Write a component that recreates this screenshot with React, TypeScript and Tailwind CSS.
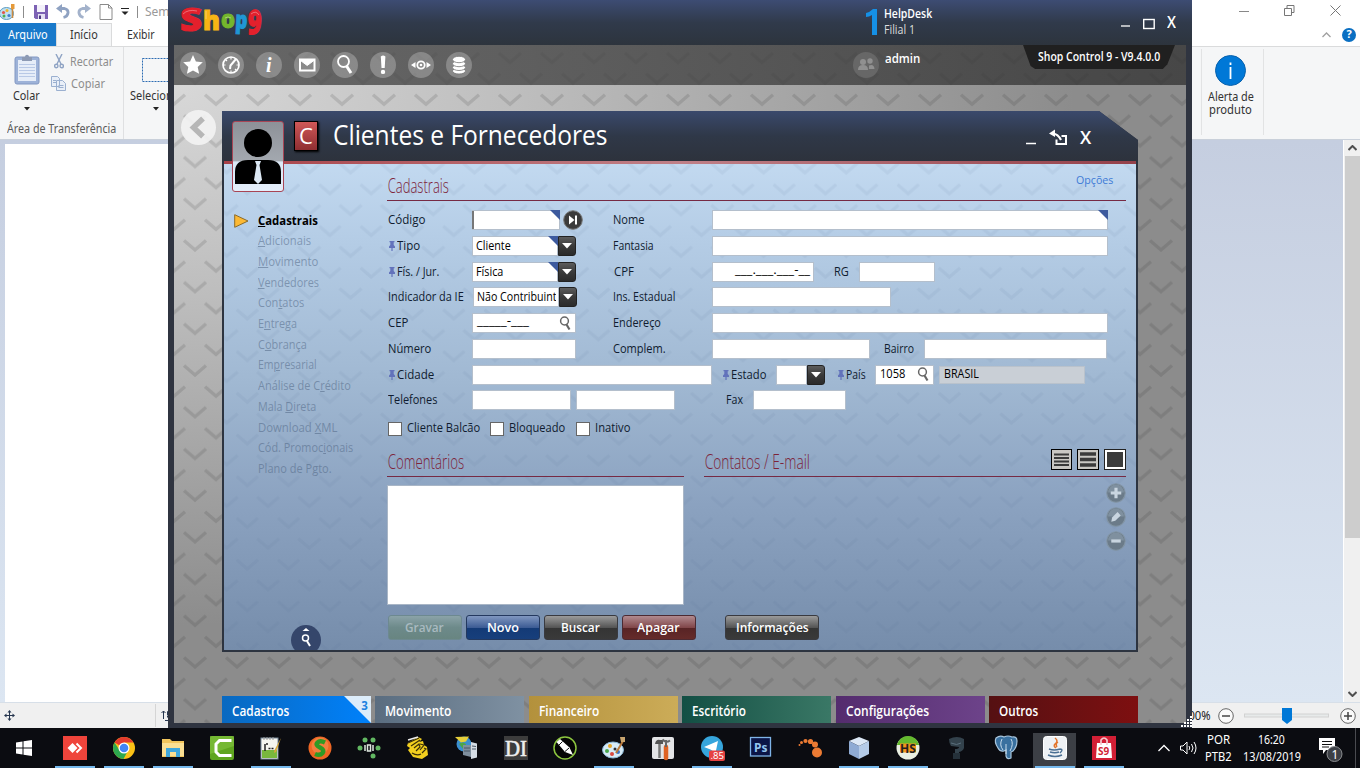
import { useLayoutEffect, useRef } from "react";
import type { ReactNode } from "react";

/* Text squeezed or stretched horizontally to a fixed width. */
function Fit({ w, className = "", children }: { w: number; className?: string; children: ReactNode }) {
  const ref = useRef<HTMLSpanElement>(null);
  useLayoutEffect(() => {
    const el = ref.current;
    if (el && el.offsetWidth) el.style.transform = `scaleX(${w / el.offsetWidth})`;
  }, [w]);
  return (
    <span className="inline-block shrink-0" style={{ width: w }}>
      <span ref={ref} className={`block w-max origin-left whitespace-pre ${className}`}>
        {children}
      </span>
    </span>
  );
}

function Chevrons({ id, x, y, w, h, color, opacity }: { id: string; x: number; y: number; w: number; h: number; color: string; opacity: number }) {
  return (
    <svg className="pointer-events-none absolute inset-0 h-full w-full" aria-hidden="true">
      <defs>
        <pattern id={id} x={x} y={y} width={w} height={h} patternUnits="userSpaceOnUse">
          <g fill="none" stroke={color} strokeOpacity={opacity} strokeWidth="3.4">
            <path d="M10 4.500 L21 14 L32 4.500" />
            <path d="M-11 25.500 L0 35 L11 25.500" />
            <path d="M31 25.500 L42 35 L53 25.500" />
          </g>
        </pattern>
      </defs>
      <rect width="100%" height="100%" fill={`url(#${id})`} />
    </svg>
  );
}

/* ---------- Paint window ---------- */

function PaintTop() {
  return (
    <div className="flex h-[140px] flex-col text-[#444]">
      <div className="flex h-[23px] items-center bg-white">
        <svg width="16" height="18" viewBox="0 0 16 18">
          <ellipse cx="6.5" cy="10.5" rx="7" ry="6" fill="#bfe0f2" stroke="#5b9cc0" />
          <circle cx="3.5" cy="9.5" r="1.6" fill="#e2574c" />
          <circle cx="7" cy="7.5" r="1.5" fill="#f0b429" />
          <circle cx="4" cy="13" r="1.5" fill="#4caf50" />
          <circle cx="9" cy="12.5" r="1.6" fill="#3f7fd0" />
          <path d="M12.5 3v12" stroke="#c98a43" strokeWidth="1.6" />
          <path d="M11 1h3.500v5H11z" fill="#e59a3a" />
        </svg>
        <span className="ml-[7px] h-[12px] w-px bg-[#8c8c8c]" />
        <svg className="ml-[10px]" width="14" height="14" viewBox="0 0 14 14">
          <path d="M0 0h14v14H1.500L0 12.500z" fill="#7d62b4" />
          <path d="M3 0h8v7H3z" fill="#f3f1fa" />
          <path d="M4 9h7v5H4z" fill="#e4e0f2" />
          <path d="M5 10.500h2v4H5z" fill="#4a3a80" />
        </svg>
        <svg className="ml-[8px]" width="14" height="15" viewBox="0 0 14 15">
          <path d="M3 4.500h5.500q4 1 3.500 4.500T7.500 13.500" fill="none" stroke="#8fa2c2" strokeWidth="2.800" />
          <path d="M6 0v9L0 4.500z" fill="#8fa2c2" />
        </svg>
        <svg className="ml-[7px]" width="14" height="15" viewBox="0 0 14 15">
          <path d="M11 4.500H5.500q-4 1-3.500 4.500T6.500 13.500" fill="none" stroke="#a3b2cb" strokeWidth="2.800" />
          <path d="M8 0v9L14 4.500z" fill="#a3b2cb" />
        </svg>
        <svg className="ml-[8px]" width="14" height="16" viewBox="0 0 14 16">
          <path d="M1 .5h8.500L13 4v11.500H1z" fill="#fff" stroke="#8a8a8a" />
          <path d="M9.500.5V4H13" fill="none" stroke="#8a8a8a" />
        </svg>
        <svg className="ml-[8px]" width="8" height="8" viewBox="0 0 8 8">
          <path d="M0 .5h8" stroke="#222" />
          <path d="M.5 3.500h7L4 7z" fill="#222" />
        </svg>
        <span className="ml-[8px] h-[12px] w-px bg-[#8c8c8c]" />
        <span className="ml-[7px] text-[12px] text-[#999]">Sem título - Paint</span>
        <div className="ml-auto flex items-center gap-[35px] pr-[19px]">
          <svg width="10" height="10"><path d="M0 4.500h10" stroke="#888" /></svg>
          <svg className="-mt-[3px]" width="11" height="11" fill="none" stroke="#777"><path d="M.5 3.500h7v7h-7zM3 3.500V.5h7v7H7.500" /></svg>
          <svg className="-mt-[3px]" width="11" height="11" stroke="#777"><path d="M.5.5l10 10M10.500.5l-10 10" /></svg>
        </div>
      </div>
      <div className="flex h-[23px] items-stretch bg-white text-[12px] text-[#333]">
        <div className="flex w-[56px] items-center justify-center bg-[#1979ca] text-white"><Fit w={40}>Arquivo</Fit></div>
        <div className="flex w-[56px] items-center justify-center border-x border-t border-[#dadbdc] bg-[#f5f6f7]"><Fit w={28}>Início</Fit></div>
        <div className="flex w-[58px] items-center justify-center"><Fit w={28}>Exibir</Fit></div>
        <div className="ml-auto flex items-center gap-[11px] pr-[4px]">
          <svg width="9" height="6" fill="none" stroke="#a0a0a0" strokeWidth="1.300"><path d="M.5 5l4-4 4 4" /></svg>
          <span className="flex h-[14px] w-[14px] items-center justify-center rounded-full bg-[#0a6fc2] text-[11px] font-bold text-white">?</span>
        </div>
      </div>
      <div className="flex h-[94px] border-y border-[#dadbdc] border-b-[#c9d0da] bg-[#f5f6f7] text-[12px]">
        <div className="flex w-[124px] flex-col border-r border-[#dfe0e2]">
          <div className="flex h-[73px]">
            <div className="flex w-[50px] flex-col items-center pl-[3px] pt-[7px]">
              <svg width="26" height="31" viewBox="0 0 26 31">
                <rect x="1" y="3" width="24" height="27" rx="2" fill="#9db2d8" stroke="#8298c2" />
                <rect x="4" y="6" width="18" height="21" fill="#e6edf8" />
                <path d="M5 10.500h16M5 13.500h16M5 16.500h16M5 19.500h16M5 22.500h16" stroke="#b9c9e6" />
                <path d="M8 3h3c0-3 4-3 4 0h3v4H8z" fill="#8d9ab4" />
              </svg>
              <span className="mt-[3px] leading-[15px]"><Fit w={27} className="text-[#333]">Colar</Fit></span>
              <svg className="mt-[4px]" width="6" height="4"><path d="M0 0h6L3 3.500z" fill="#222" /></svg>
            </div>
            <div className="flex flex-col gap-[5px] pt-[6px] text-[#8d8d8d]">
              <div className="flex h-[17px] items-center gap-[6px] pl-[4px]">
                <svg width="10" height="15" fill="none" stroke="#8fa3c4" strokeWidth="1.400"><path d="M2 0l5 10M8 0L3 10" /><circle cx="2.300" cy="12" r="1.700" /><circle cx="7.700" cy="12" r="1.700" /></svg>
                <Fit w={43}>Recortar</Fit>
              </div>
              <div className="flex h-[17px] items-center gap-[5px] pl-[1px]">
                <svg width="15" height="15" fill="#e9eff8" stroke="#9bb0d0"><path d="M.5.5h6l2 2v8h-8zM5.500 4.500h6l3 3v7h-9z" /><path d="M2 4.500h3M2 6.500h3M7.500 9.500h5M7.500 11.500h5" /></svg>
                <Fit w={34}>Copiar</Fit>
              </div>
            </div>
          </div>
          <span className="pl-[7px] leading-[18px]"><Fit w={109} className="text-[#5a5a5a]">Área de Transferência</Fit></span>
        </div>
        <div className="flex w-[64px] flex-col items-center pt-[11px]">
          <svg width="28" height="24"><rect x=".5" y=".5" width="27" height="23" fill="none" stroke="#2c6cb3" strokeDasharray="2 1" /></svg>
          <span className="mt-[6px] leading-[15px]"><Fit w={53} className="text-[#333]">Selecionar</Fit></span>
          <svg className="mt-[4px]" width="6" height="4"><path d="M0 0h6L3 3.500z" fill="#222" /></svg>
        </div>
        <div className="ml-auto mr-[96px] mt-[2px] flex h-[86px] w-[63px] flex-col items-center border-x border-[#e2e3e4] pr-[4px] pt-[6px]">
          <svg width="31" height="31" viewBox="0 0 31 31"><circle cx="15.500" cy="15.500" r="15" fill="#0078d7" stroke="#0a62ad" /><path d="M15.500 12v12M15.500 7.500v2.500" stroke="#fff" strokeWidth="1.800" /></svg>
          <span className="mt-[4px] flex flex-col items-center text-[12px] leading-[13px] text-[#333]"><Fit w={46}>Alerta de</Fit><Fit w={43}>produto</Fit></span>
        </div>
      </div>
    </div>
  );
}

function Paint() {
  return (
    <div className="flex h-[728px] w-full flex-col overflow-hidden font-['Noto_Sans',sans-serif]">
      <PaintTop />
      <div className="flex h-[562px]">
        <div className="flex-1 bg-gradient-to-b from-[#c5cee0] to-[#dce6f2] pl-[5px] pt-[4px]">
          <div className="h-full w-[600px] bg-white" />
        </div>
        <div className="flex w-[17px] flex-col items-center border-l border-white bg-[#f0f0f0]">
          <svg className="my-[5px]" width="9" height="6" fill="none" stroke="#505050" strokeWidth="2"><path d="M.5 5l4-4 4 4" /></svg>
          <div className="h-[382px] w-[15px] bg-[#cdcdcd]" />
          <svg className="mb-[5px] mt-auto" width="9" height="6" fill="none" stroke="#505050" strokeWidth="2"><path d="M.5 1l4 4 4-4" /></svg>
        </div>
      </div>
      <div className="flex h-[26px] items-center border-t border-[#d7dfe8] bg-[#f0f0f0]">
        <svg className="ml-[4px]" width="11" height="11" stroke="#26364f" fill="#26364f"><path d="M5.500 1v9M1 5.500h9" /><path stroke="none" d="M5.500 0l2 2.500h-4zM5.500 11l2-2.500h-4zM0 5.500L2.500 3.500v4zM11 5.500L8.500 3.500v4z" /></svg>
        <span className="ml-[140px] h-[23px] w-px bg-[#d5d5d5]" />
        <svg className="ml-[5px]" width="11" height="11" stroke="#26364f" fill="none"><path d="M2.500 1v8M.5 3l2-2 2 2M6.500 5V1.500h4M6.500 5.500v2M4 10.500h7" /></svg>
        <div className="ml-auto flex items-center text-[12px] text-[#222]">
          <Fit w={29}>100%</Fit>
          <svg className="ml-[7px]" width="16" height="16" fill="#fafafa" stroke="#666"><circle cx="8" cy="8" r="7.300" /><path d="M4 8h8" stroke="#444" strokeWidth="1.500" /></svg>
          <svg className="ml-[10px]" width="85" height="18"><rect x=".5" y="7" width="84" height="3" fill="#e7eaea" stroke="#d2d2d2" /><path d="M38 1h10v12l-5 4-5-4z" fill="#0078d7" /></svg>
          <svg className="ml-[11px] mr-[4px]" width="16" height="16" fill="#fafafa" stroke="#666"><circle cx="8" cy="8" r="7.300" /><path d="M4 8h8M8 4v8" stroke="#444" strokeWidth="1.500" /></svg>
        </div>
      </div>
    </div>
  );
}

/* ---------- Shop Control window ---------- */

/* letter, x, baseline, font size, width, colour, rotation */
const logo: [string, number, number, number, number, string, number][] = [
  ["S", 2, 26, 32, 22, "#e3202c", 0],
  ["h", 25, 25, 27, 17, "#f8b414", 0],
  ["o", 43, 23, 25, 14, "#74b62c", 0],
  ["p", 57, 23, 24, 12, "#1f97d4", 3],
  ["9", 69, 29, 34, 14, "#e3202c", 3],
];

function Logo() {
  return (
    <svg width="88" height="40" viewBox="0 0 88 40" className="overflow-visible font-['Open_Sans',sans-serif] font-extrabold">
      {logo.map(([c, x, y, s, w, f, r]) => (
        <g key={c} transform={`translate(${x} ${y}) rotate(${r})`}>
          <text fontSize={s} textLength={w} lengthAdjust="spacingAndGlyphs" fill={f} stroke={f} strokeWidth="1">{c}</text>
        </g>
      ))}
      <g fill="none" stroke="#fff" strokeOpacity=".35" strokeWidth="1">
        <path d="M5 9q5-5 14-3M28 6v8M47 13q3-2 6 0M73 9q5-4 8 1" />
      </g>
    </svg>
  );
}

const toolIcons: ReactNode[] = [
  <path key="a" d="M13 3l2.900 6.400 6.900.8-5.100 4.800 1.400 6.800-6.100-3.300-6.100 3.300 1.400-6.800-5.100-4.800 6.900-.8z" fill="#fff" />,
  <g key="b" fill="none" stroke="#fff" strokeWidth="1.700"><circle cx="13" cy="13" r="8" /><path d="M13 5v2.500M13 18.500V21M5 13h2.500M18.500 13H21M7.500 7.500l1.500 1.500M18.500 18.500L17 17" strokeWidth="1.200" /><path d="M18 7l-5.500 6.500-.5 3.500" strokeWidth="2" /></g>,
  <text key="c" x="10" y="19.500" fontSize="20" fontStyle="italic" fontWeight="bold" fontFamily="Liberation Serif, serif" fill="#fff">i</text>,
  <g key="d" fill="none" stroke="#fff" strokeWidth="2"><rect x="6" y="7.500" width="14.500" height="11" /><path d="M6.500 8.500l6.700 5 6.700-5z" fill="#fff" strokeWidth="1" /></g>,
  <g key="e" fill="none" stroke="#fff"><circle cx="11.500" cy="9.500" r="5.500" strokeWidth="1.800" /><path d="M14.500 14l4.500 7" strokeWidth="3" /></g>,
  <path key="f" d="M10.800 4.500q2.400-2 4.600 0L14.700 16h-3.200zM13 17.700a2.200 2.200 0 110 4.400 2.200 2.200 0 010-4.400z" fill="#fff" />,
  <g key="g" fill="none" stroke="#fff"><circle cx="13" cy="13" r="3.700" strokeWidth="1.800" /><circle cx="13" cy="13" r="1.300" fill="#fff" stroke="none" /><path d="M3 13l4.500-3v6zM23 13l-4.500-3v6z" fill="#fff" stroke="none" /></g>,
  <g key="h" fill="#fff" stroke="#777" strokeWidth=".8"><ellipse cx="13" cy="19" rx="6.500" ry="3" /><ellipse cx="13" cy="15.500" rx="6.500" ry="3" /><ellipse cx="13" cy="11.700" rx="6.500" ry="3" /><ellipse cx="13" cy="7.500" rx="6.500" ry="3.200" /></g>,
];

function Pin() {
  return (
    <svg className="shrink-0" width="10" height="10" viewBox="0 0 10 10"><path d="M2.500 0h5v1.200H6.700V4L8 5.500V7H5.600v3H4.400V7H2V5.500L3.300 4V1.200h-.8z" fill="#6272bb" /></svg>
  );
}

function Magnifier() {
  return (
    <svg width="13" height="15" viewBox="0 0 13 15" fill="none" stroke="#666"><circle cx="5.500" cy="5" r="3.900" strokeWidth="1.500" /><path d="M7.500 8.500l3 5" strokeWidth="2.200" /></svg>
  );
}

function Label({ t, fit, w, pin = false, inset = false }: { t: string; fit: number; w: number; pin?: boolean; inset?: boolean }) {
  return (
    <div className={`flex shrink-0 items-center text-[12.5px] leading-none text-[#101c30] ${inset ? "pl-[0.6px]" : ""}`} style={{ width: w }}>
      {pin && <Pin />}
      <Fit w={fit} className="leading-[16px]">{t}</Fit>
    </div>
  );
}

function Field({ w, corner = false, children }: { w: number; corner?: boolean; children?: ReactNode }) {
  return (
    <div className="relative flex h-[20px] shrink-0 items-center border border-[#b4bfcc] bg-white text-[12px] font-[450] text-black" style={{ width: w }}>
      {children}
      {corner && <svg className="absolute -right-px -top-px" width="10" height="10"><path d="M0 0h10v10z" fill="#3d5a9e" /></svg>}
    </div>
  );
}

function DropButton() {
  return (
    <div className="flex h-[20px] w-[18px] shrink-0 items-center justify-center rounded-r-[3px] border border-[#222] bg-gradient-to-b from-[#5c5c5c] via-[#3a3a3a] to-[#2b2b2b]">
      <svg width="10" height="6"><path d="M0 0h10L5 5.500z" fill="#fff" /></svg>
    </div>
  );
}

const menu: [string, string, string, number][] = [
  ["", "A", "dicionais", 53],
  ["", "M", "ovimento", 60],
  ["", "V", "endedores", 61],
  ["Con", "t", "atos", 46],
  ["E", "n", "trega", 39],
  ["C", "o", "brança", 49],
  ["Em", "p", "resarial", 59],
  ["Análise de C", "r", "édito", 93],
  ["Mala ", "D", "ireta", 58],
  ["Download ", "X", "ML", 79],
  ["Cód. Promoc", "i", "onais", 95],
  ["Plano de P", "g", "to.", 74],
];

function Sidebar() {
  return (
    <div className="flex w-[163px] shrink-0 flex-col pt-[46.3px] text-[12.5px]">
      <div className="flex h-[20.7px] items-center pl-[10px]">
        <svg width="15" height="14"><path d="M.7.7v12.600L14 7z" fill="#fdb933" stroke="#8a6a2a" /></svg>
        <span className="ml-[9px] leading-none"><Fit w={60} className="font-bold leading-[18px] text-black"><u>C</u>adastrais</Fit></span>
      </div>
      {menu.map(([a, b, c, w]) => (
        <div key={c} className="flex h-[20.7px] items-center pl-[34px] leading-none">
          <Fit w={w} className="leading-[18px] text-[#4a607e]/50">{a}<u>{b}</u>{c}</Fit>
        </div>
      ))}
      <div className="-mb-[5px] ml-[67px] mt-auto flex h-[30px] w-[30px] flex-col items-center rounded-full bg-[#35466b] pt-[3px]">
        <svg width="10" height="20" viewBox="0 0 10 20" fill="none" stroke="#fff"><path d="M1.500 3h7L5 0z" fill="#fff" stroke="none" /><circle cx="4.500" cy="10" r="3" strokeWidth="1.500" /><path d="M6 13l3 5" strokeWidth="2" /></svg>
      </div>
    </div>
  );
}

function Row({ children }: { children: ReactNode }) {
  return <div className="flex h-[25.75px] items-center">{children}</div>;
}
function Left({ children }: { children: ReactNode }) {
  return <div className="flex w-[226px] shrink-0 items-center">{children}</div>;
}

function Form() {
  return (
    <div className="flex flex-col pt-[6.2px]">
      <Row>
        <Left>
          <Label t="Código" fit={38} w={85} inset />
          <Field w={88} corner><span className="-ml-px h-full w-[2px] bg-[#777]" /></Field>
          <svg className="ml-[3px]" width="20" height="20"><circle cx="10" cy="10" r="9.300" fill="#3b3b3b" stroke="#777" /><path d="M6 5.500v9l5.500-4.500z" fill="#fff" /><path d="M13 5.500v9" stroke="#fff" strokeWidth="2" /></svg>
        </Left>
        <Label t="Nome" fit={32} w={99} />
        <Field w={396} corner />
      </Row>
      <Row>
        <Left>
          <Label t="Tipo" fit={23} w={85} pin />
          <Field w={86} corner><span className="pl-[3px]"><Fit w={35}>Cliente</Fit></span></Field><DropButton />
        </Left>
        <Label t="Fantasia" fit={41} w={99} />
        <Field w={396} />
      </Row>
      <Row>
        <Left>
          <Label t="Fís. / Jur." fit={42} w={85} pin />
          <Field w={86} corner><span className="pl-[3px]"><Fit w={27}>Física</Fit></span></Field><DropButton />
        </Left>
        <Label t="CPF" fit={20} w={99} inset />
        <Field w={102}><span className="pb-[4px] pl-[22px]"><Fit w={75}>___.___.___-__</Fit></span></Field>
        <span className="w-[20px]" />
        <Label t="RG" fit={15} w={25} />
        <Field w={76} />
      </Row>
      <Row>
        <Left>
          <Label t="Indicador da IE" fit={76} w={86} inset />
          <Field w={86}><span className="w-[82px] overflow-hidden pl-[3px]"><Fit w={86}>Não Contribuinte</Fit></span></Field><DropButton />
        </Left>
        <Label t="Ins. Estadual" fit={62} w={99} />
        <Field w={179} />
      </Row>
      <Row>
        <Left>
          <Label t="CEP" fit={20} w={85} inset />
          <Field w={104}><span className="pb-[4px] pl-[4px]"><Fit w={52}>_____-___</Fit></span><span className="ml-auto mr-[3px]"><Magnifier /></span></Field>
        </Left>
        <Label t="Endereço" fit={48} w={99} />
        <Field w={396} />
      </Row>
      <Row>
        <Left>
          <Label t="Número" fit={43} w={85} inset />
          <Field w={104} />
        </Left>
        <Label t="Complem." fit={53} w={99} />
        <Field w={158} />
        <span className="w-[14px]" />
        <Label t="Bairro" fit={30} w={40} />
        <Field w={183} />
      </Row>
      <Row>
        <Label t="Cidade" fit={37} w={85} pin />
        <Field w={240} />
        <span className="w-[9px]" />
        <Label t="Estado" fit={35} w={55} pin />
        <Field w={31} /><DropButton />
        <span className="w-[11px]" />
        <Label t="País" fit={20} w={39} pin />
        <Field w={59}><span className="pb-[2px] pl-[4px]"><Fit w={25}>1058</Fit></span><span className="ml-auto mr-[3px]"><Magnifier /></span></Field>
        <div className="ml-[5px] flex h-[18px] w-[146px] items-center border border-[#b9c2cc] bg-[#c9cfd6] pb-[2px] pl-[4px] text-[12px] font-[450] text-black"><Fit w={35}>BRASIL</Fit></div>
      </Row>
      <Row>
        <Label t="Telefones" fit={49} w={85} inset />
        <Field w={99} />
        <span className="w-[5px]" />
        <Field w={99} />
        <span className="w-[51px]" />
        <Label t="Fax" fit={17} w={27} />
        <Field w={93} />
      </Row>
      <div className="flex h-[29.8px] items-center pl-px pt-[2px]">
        {([["Cliente Balcão", 73, 102], ["Bloqueado", 56, 86], ["Inativo", 35, 60]] as [string, number, number][]).map(([t, f, w]) => (
          <div key={t} className="flex items-center gap-[5px]" style={{ width: w }}>
            <span className="h-[14px] w-[14px] shrink-0 border border-[#666] bg-white" />
            <span className="pb-[2px]"><Label t={t} fit={f} w={f} /></span>
          </div>
        ))}
      </div>
    </div>
  );
}

function Heading({ t, w, children }: { t: string; w: number; children?: ReactNode }) {
  return (
    <div className="flex items-center justify-between border-b border-[#762a44] text-[20px] text-[#7d2339]">
      <Fit w={w} className="pb-px pl-px font-[360] leading-[26px]">{t}</Fit>
      {children}
    </div>
  );
}

function GlossButton({ t, f, w, tone }: { t: string; f: number; w: string; tone: string }) {
  return (
    <button className={`flex h-[25px] items-center justify-center rounded-[3px] border text-[13px] font-semibold ${w} ${tone}`}>
      <Fit w={f} className="pb-px leading-[22px]">{t}</Fit>
    </button>
  );
}

function RoundButton({ d }: { d: string }) {
  return (
    <svg className="h-[20px] w-[20px]" viewBox="0 0 19 19"><circle cx="9.500" cy="9.500" r="8.800" fill="#6b7b89" stroke="#8395a5" /><path d="M2 9a7.500 7.500 0 0115 0z" fill="#7f909f" /><path d={d} fill="#c9d5e0" /></svg>
  );
}

function Main() {
  return (
    <div className="flex w-[739px] flex-col">
      <div className="flex h-[37px] flex-col justify-end">
        <Heading t="Cadastrais" w={62}>
          <span className="mr-[13px] pb-[13px] text-[11.5px] leading-none text-[#3d7ad6]"><Fit w={37}>Opções</Fit></span>
        </Heading>
      </div>
      <Form />
      <div className="flex gap-[20px]">
        <div className="w-[297px]">
          <div className="flex h-[34px] flex-col justify-end"><Heading t="Comentários" w={77} /></div>
          <div className="mt-[8px] h-[120px] border border-[#a9b6c6] bg-white" />
        </div>
        <div className="flex flex-1 flex-col">
          <div className="flex h-[34px] flex-col justify-end">
            <Heading t="Contatos / E-mail" w={106}>
              <div className="flex gap-[5px] pb-[5px]">
                <svg width="21" height="21"><rect x=".5" y=".5" width="20" height="20" fill="#cac8c4" stroke="#000" /><path d="M3 5.500h15M3 9h15M3 12.500h15M3 16h15" stroke="#3b3b3b" strokeWidth="2" /></svg>
                <svg width="22" height="21"><rect x=".5" y=".5" width="21" height="20" fill="#cac8c4" stroke="#000" /><path d="M3 5h16M3 10.500h16M3 16h16" stroke="#3b3b3b" strokeWidth="3.500" /></svg>
                <svg width="22" height="21"><rect x=".5" y=".5" width="21" height="20" fill="#fff" stroke="#222" /><rect x="3" y="3" width="16" height="15" fill="#3b3b3b" /></svg>
              </div>
            </Heading>
          </div>
          <div className="flex flex-col items-end gap-[4px] pt-[6px]">
            <RoundButton d="M8 4.500h3V8h3.500v3H11v3.500H8V11H4.500V8H8z" />
            <RoundButton d="M5 14l.8-4L11 4.800 14 8l-5.200 5z" />
            <RoundButton d="M5 8h9v3H5z" />
          </div>
        </div>
      </div>
      <div className="mt-[10px] flex gap-[4px] pl-[0.5px] text-white">
        <GlossButton t="Gravar" f={39} w="w-[74px]" tone="border-[#6d8990] bg-gradient-to-b from-[#8ba3a8] via-[#6d8a8a] to-[#688581] text-[#a9bac0]" />
        <GlossButton t="Novo" f={32} w="w-[74px]" tone="border-[#24395f] bg-linear-[to_bottom,#8097c0,#3d5c95_50%,#143a76_52%,#173f7c]" />
        <GlossButton t="Buscar" f={39} w="w-[74px]" tone="border-[#393a40] bg-linear-[to_bottom,#9b9b9b,#555_50%,#343434_52%,#3a3a3a]" />
        <GlossButton t="Apagar" f={43} w="w-[74px]" tone="border-[#4c2a32] bg-linear-[to_bottom,#b18a8f,#81474a_50%,#582425_52%,#652b2a]" />
        <span className="w-[21.5px]" />
        <GlossButton t="Informações" f={73} w="w-[94px]" tone="border-[#393a40] bg-linear-[to_bottom,#9b9b9b,#555_50%,#343434_52%,#3a3a3a]" />
      </div>
    </div>
  );
}

function ClientPanel() {
  return (
    <div className="relative h-[541px] w-[916px] bg-[#2d3440] [clip-path:polygon(0_0,877px_0,916px_29px,916px_100%,0_100%)]">
      <div className="flex h-[50px] items-center bg-gradient-to-b from-[#3a496c] via-[#2f3848] to-[#2d323c] pl-[72px] text-white">
        <div className="flex h-[30px] w-[24px] items-center justify-center border border-black bg-gradient-to-b from-[#d05858] to-[#8f2e32] text-[22px] leading-none shadow-[1px_1px_2px_#000]">
          <span className="pb-[3px]"><Fit w={14}>C</Fit></span>
        </div>
        <span className="ml-[15px] pb-[2px]"><Fit w={274} className="text-[26.5px] font-[380] leading-[34px]">Clientes e Fornecedores</Fit></span>
        <div className="ml-auto flex items-center pr-[47px] pt-[3px]">
          <svg width="11" height="16"><path d="M0 13.500h10" stroke="#fff" strokeWidth="1.300" /></svg>
          <svg className="ml-[12px]" width="19" height="17" fill="none" stroke="#fff" strokeWidth="2"><path d="M12.500 7H17v8H7.500V10.500" /><path d="M4 4.500q5 .5 8 6.500" strokeWidth="2.200" /><path d="M0 4.500L6 .5v7.500z" fill="#fff" stroke="none" /></svg>
          <span className="ml-[12px]"><Fit w={11} className="text-[18px] font-semibold leading-[20px]">X</Fit></span>
        </div>
      </div>
      <div className="mx-[2px] h-[3px] bg-gradient-to-r from-[#a84148] via-[#c08088] to-[#94404a]" />
      <div className="relative mx-[2px] flex h-[486px] overflow-hidden bg-linear-[to_bottom,#c2d9f0,#b5cde6_15%,#a0b8d2_45%,#8ba2c0_70%,#768dab]">
        <Chevrons id="chev-panel" x={23} y={36.6} w={41.3} h={41.7} color="#46648c" opacity={0.08} />
        <div className="relative flex">
          <Sidebar />
          <Main />
        </div>
      </div>
      <div className="absolute left-[10px] top-[10px] h-[71px] w-[52px] overflow-hidden rounded-[3px] border border-[#a84555] bg-linear-[to_bottom,#8d9198,#a3a8af_56%,#dbe8f6_58%,#e4eefa]">
        <svg width="50" height="69" viewBox="0 0 50 69"><circle cx="25" cy="21" r="14" fill="#000" /><path d="M2 62V50q0-12 13-12h20q13 0 13 12v12z" fill="#000" /><path d="M22 39h6l-1.500 4L29 58l-4 4-4-4 2.500-15z" fill="#dce8f4" /></svg>
      </div>
    </div>
  );
}

const tabs: [string, number, string][] = [
  ["Cadastros", 57, "bg-gradient-to-r from-[#0969c0] to-[#0081fb]"],
  ["Movimento", 66, "bg-gradient-to-r from-[#5a6d80] to-[#7f91a2]"],
  ["Financeiro", 60, "bg-gradient-to-r from-[#b3913c] to-[#ccac58]"],
  ["Escritório", 54, "bg-gradient-to-r from-[#124f44] to-[#3a7866]"],
  ["Configurações", 83, "bg-gradient-to-r from-[#542c6e] to-[#6d438a]"],
  ["Outros", 39, "bg-gradient-to-r from-[#551012] to-[#7e0f10]"],
];

function ShopWindow() {
  return (
    <div className="absolute left-[168px] top-0 flex h-[728px] w-[1024px] flex-col bg-[#2f3440] font-['Open_Sans','Noto_Sans',sans-serif] text-white">
      <div className="flex h-[45px] shrink-0 bg-gradient-to-b from-[#3d4c73] via-[#303a4b] to-[#2d343d] pl-[10px]">
        <span className="pt-[5px]"><Logo /></span>
        <svg className="ml-[600px] mt-[9px]" width="13" height="26"><path d="M0 4Q4 3 7 0h4v26H6V6Q3 8 0 8z" fill="#1590e6" /></svg>
        <div className="ml-[5px] flex flex-col pt-[6px] text-[12px] leading-[16px]">
          <Fit w={48} className="font-semibold">HelpDesk</Fit>
          <Fit w={31} className="text-[#ddd]">Filial 1</Fit>
        </div>
        <div className="ml-auto flex pr-[16px] pt-[14px]">
          <svg width="9" height="14"><path d="M0 12h9" stroke="#fff" strokeWidth="1.300" /></svg>
          <svg className="ml-[13px]" width="12" height="16"><rect x=".7" y="5.500" width="10.500" height="9" fill="none" stroke="#fff" strokeWidth="1.400" /></svg>
          <span className="-mt-[6px] ml-[12px]"><Fit w={9} className="text-[16px] font-semibold leading-[28px]">X</Fit></span>
        </div>
      </div>
      <div className="relative mx-[6px] flex h-[678px] flex-col overflow-hidden bg-[radial-gradient(ellipse_900px_540px_at_0_40px,#d8d8d8,#bebebe_38%,#8c8c8c)]">
        <Chevrons id="chev-app" x={0} y={24.2} w={42} h={41.7} color="#303030" opacity={0.15} />
        <div className="relative flex h-[40px] shrink-0 items-center bg-linear-[to_right,rgba(75,75,75,0.8),rgba(70,70,70,0.8)_40%,rgba(48,48,48,0.75)] pl-[6px]">
          <div className="flex gap-[12px]">
            {toolIcons.map((icon, i) => (
              <svg key={i} width="26" height="26" viewBox="0 0 26 26"><circle cx="13" cy="13" r="13" fill="#fff" fillOpacity=".25" />{icon}</svg>
            ))}
          </div>
          <svg className="ml-[381px]" width="26" height="26" viewBox="0 0 26 26"><circle cx="13" cy="13" r="13" fill="#fff" fillOpacity=".12" /><g fill="#909090"><circle cx="10" cy="10" r="3" /><path d="M5 18q0-5 5-5t5 5z" /><circle cx="17" cy="9" r="2.700" /><path d="M16 17v-3.500q5-2 5.500 3.500z" /></g></svg>
          <span className="ml-[6px] pb-[12px] text-[12.5px] font-semibold leading-[16px]"><Fit w={35}>admin</Fit></span>
          <div className="ml-auto mr-[11px] flex h-[24px] w-[152px] justify-center self-start bg-[#202020] pt-[4px] [clip-path:polygon(0_0,100%_0,95%_80%,92%_100%,8%_100%,5%_88%)]">
            <Fit w={122} className="text-[12px] font-semibold leading-[16px]">Shop Control 9 - V9.4.0.0</Fit>
          </div>
        </div>
        <div className="relative flex pt-[26px]">
          <svg className="ml-[7px] mr-[6px] -mt-px" width="35" height="35"><circle cx="17.500" cy="17.500" r="17.500" fill="#f3f3f3" fillOpacity=".9" /><path d="M22 8.500L12.500 17.500 22 26.500" fill="none" stroke="#b6b6b6" strokeWidth="5.500" /></svg>
          <ClientPanel />
        </div>
        <div className="relative mt-auto flex h-[27px] gap-[4.500px] pl-[48px] pr-[48px]">
          {tabs.map(([t, w, bg], i) => (
            <div key={t} className={`relative flex flex-1 items-center pl-[10px] pt-[3px] text-[13.5px] font-semibold ${bg}`}>
              <Fit w={w}>{t}</Fit>
              {i === 0 && (
                <>
                  <svg className="absolute right-0 top-0" width="27" height="27"><path d="M0 0h27v27z" fill="#dcecfa" /></svg>
                  <span className="absolute right-[3px] top-[3px] text-[11.5px] font-bold leading-[14px] text-[#1d82e0]">3</span>
                </>
              )}
            </div>
          ))}
        </div>
      </div>
      <svg className="absolute bottom-0 right-0" width="13" height="13" fill="#fff"><path d="M11 1h2v2h-2zM8 4h2v2H8zM11 4h2v2h-2zM5 7h2v2H5zM8 7h2v2H8zM11 7h2v2h-2zM2 10h2v2H2zM5 10h2v2H5zM8 10h2v2H8zM11 10h2v2h-2z" /></svg>
    </div>
  );
}

/* ---------- Taskbar ---------- */

const apps: { icon: ReactNode; on?: boolean; active?: boolean }[] = [
  { on: true, icon: <g><rect width="24" height="24" fill="#ef443b" /><path d="M4.500 12L9.500 7l5 5-5 5z" fill="#fff" /><path d="M13.500 7.500l4.500 4.500-4.500 4.500" fill="none" stroke="#fff" strokeWidth="2" /></g> },
  { on: true, icon: <g><circle cx="12" cy="12" r="11" fill="#fbc116" /><path d="M12 12L2.500 6.500A11 11 0 0121.500 6.500H12z" fill="#e33b2e" /><path d="M2.500 6.500A11 11 0 0011.500 23l4.500-8.500-8 .5z" fill="#2da94f" /><circle cx="12" cy="12" r="5.500" fill="#fff" /><circle cx="12" cy="12" r="4.300" fill="#4285f4" /></g> },
  { on: true, icon: <g><path d="M1 3h8l2 2h12v16H1z" fill="#f2c55c" /><path d="M1 7h22v13H1z" fill="#fbdf93" /><path d="M5 21v-9h14v9h-4v-5H9v5z" fill="#3fa7dd" /></g> },
  { icon: <g><rect width="24" height="24" rx="2" fill="#5fa51f" /><path d="M0 0h24v10L0 18z" fill="#84c441" fillOpacity=".6" /><path d="M20 6V4.500H9.500L6 8v8l3.500 3.500H20V18" fill="none" stroke="#fff" strokeWidth="3" /></g> },
  { on: true, icon: <g><rect x="2" y="2" width="17" height="21" fill="#f5f5ee" stroke="#789" /><rect x="3" y="14" width="15" height="8" fill="#79b83d" /><path d="M5 1v3M8 1v3M11 1v3M14 1v3" stroke="#999" /><path d="M6 8v7M9.500 12.500h2M12.500 12.500h2M7 8h2" stroke="#222" strokeWidth="1.500" /><path d="M22 2l-5 14-2 1 .5-3z" fill="#d9a93a" /></g> },
  { icon: <g><circle cx="12" cy="12" r="11.500" fill="#ee6623" /><circle cx="12" cy="10" r="8.500" fill="#f8965a" fillOpacity=".5" /><path d="M17 6.500Q12 4 9.500 6.500T12 11.500 14.500 17 7 18" fill="none" stroke="#2f9a25" strokeWidth="4.500" /></g> },
  { icon: <g fill="#62b862"><circle cx="8" cy="4" r="2.500" /><circle cx="16" cy="4" r="2.500" /><circle cx="3" cy="12" r="2.500" /><circle cx="21" cy="12" r="2.500" /><circle cx="16" cy="20" r="2.500" /><path d="M8 9v6M10.500 9h3v6h-3zM16 9v6" stroke="#dfe7df" strokeWidth="1.500" fill="none" /></g> },
  { icon: <g><path d="M2 7L12 1l4 2-3 3 4-1 1 4 3 2 1 8-6 4-9-2-5-7 2-2-3-2z" fill="#f2cf1e" /><path d="M2 7l11-5M5 10l9-6M8 12l5-4 1 3-4 4M14 8l4 1-4 5M18 12l2 1-4 4M6 17q5 3 9 1" fill="none" stroke="#3a2f08" strokeWidth="1.200" /><path d="M2 4l10-3" stroke="#eee" strokeWidth="1.500" /></g> },
  { icon: <g><circle cx="9" cy="8" r="7.500" fill="#3b8fd0" /><path d="M0 1l14-.5-3 5-5 1z" fill="#e6cf3a" /><path d="M4 8q3-3 7 0l-2 6z" fill="#4ca648" /><path d="M8 9h8v12L8 19z" fill="#7f8f9e" /><path d="M16 6l6 1.500v14L16 23z" fill="#d5dde5" /><path d="M9 12h6M9 15h6M17 10l4 .5M17 13h4" stroke="#4a5866" /></g> },
  { icon: <g><rect width="24" height="24" fill="#3c3c3c" /><text x="1" y="20" fontSize="23" textLength="22" lengthAdjust="spacingAndGlyphs" fontFamily="Liberation Serif, serif" fill="#eee" stroke="#eee" strokeWidth=".6">DI</text></g> },
  { icon: <g><circle cx="12" cy="12" r="11" fill="#050505" stroke="#8dc63f" strokeWidth="1.500" /><path d="M3.500 6L7 3l9.500 8.500L20 19l-8-3z" fill="#fff" /><path d="M6 9l3.500-3.500M16 12l-4 3.500" stroke="#111" /></g> },
  { on: true, icon: <g><ellipse cx="11" cy="14" rx="10.500" ry="8" fill="#d7ebf7" stroke="#89b5d3" /><circle cx="5" cy="15" r="2" fill="#49a84d" /><circle cx="8" cy="10" r="2" fill="#e8a62a" /><circle cx="10" cy="18" r="2" fill="#d9493e" /><circle cx="16" cy="16" r="2" fill="#3873c9" /><circle cx="13" cy="13" r="1.500" fill="#333" /><path d="M21 5l-7 12" stroke="#b97a3c" strokeWidth="2" /><path d="M18 1h5v5h-4z" fill="#c9a56f" /></g> },
  { icon: <g><rect x="1" y="1" width="22" height="22" rx="2" fill="#e4e5e7" /><path d="M8.500 8v14" stroke="#777" strokeWidth="2.500" /><path d="M4 8q1-5 5-4h3v4H7z" fill="#555" /><path d="M15 11v11" stroke="#df6323" strokeWidth="4.500" strokeLinecap="round" /><path d="M15 4v7M11.500 3.500q3.500 4 7.500 1" stroke="#666" strokeWidth="2" fill="none" /></g> },
  { on: true, icon: <g><circle cx="12" cy="11" r="11" fill="#36a5dc" /><path d="M4 11l14-6-2.500 12-5-3.500z" fill="#fff" /><rect x="9" y="14.500" width="16" height="10.500" rx="2" fill="#e64242" /><text x="10.500" y="23.200" fontSize="9.500" fill="#fff">.85</text></g> },
  { icon: <g><rect x="1.500" y="1.500" width="20" height="18.500" fill="#0b1546" stroke="#7fb4e8" strokeWidth="1.300" /><text x="5" y="15.500" fontSize="12" fontWeight="bold" fill="#93c5f0">Ps</text></g> },
  { icon: <g fill="#ec7b33"><circle cx="19" cy="16.500" r="5" /><circle cx="17" cy="8.500" r="3" /><circle cx="12.500" cy="5.500" r="2.600" /><circle cx="7.500" cy="5" r="2.100" /><circle cx="3.500" cy="6.500" r="1.500" /><circle cx="1.500" cy="9" r="1" /></g> },
  { on: true, icon: <g><path d="M12 1l10 4-10 5L2 5z" fill="#dce8f6" /><path d="M2 5l10 5v13L2 18z" fill="#8fabd4" /><path d="M22 5l-10 5v13l10-5z" fill="#b4cbe8" /></g> },
  { on: true, icon: <g><circle cx="12" cy="12" r="11.500" fill="#e9efe2" /><path d="M.8 9a11.500 11.500 0 0122.400 0z" fill="#64b92e" /><path d="M4 7.500h16v9H4z" fill="#f2941b" /><text x="4" y="16.500" fontSize="12" fontWeight="bold" fill="#222">HS</text></g> },
  { icon: <g fill="#33424c"><path d="M4 3q8-4 15 0v9q-1 3-5 4v2h-4v-5q4 0 4-2l-8-1q-2-3-2-7z" /><path d="M8 17h7v6H8z" fill="#25313a" /><path d="M6 7q6 3 10 0" stroke="#5b707e" fill="none" /></g> },
  { icon: <g><path d="M2 2q4-3 8-1 4-2 8 0 5-1 5 4 0 6-4 10l-2 1v6q-4 2-5-2v-6l-2 1q-4 1-6-3Q0 6 2 2z" fill="#39709f" stroke="#a9c6dd" strokeWidth="1.200" /><path d="M8 3q-3 6 1 11M17 3q3 5-1 12M12 8v10" fill="none" stroke="#c7dcec" /></g> },
  { on: true, active: true, icon: <g><rect x=".5" y=".5" width="23" height="23" rx="3" fill="#eef1f4" stroke="#fff" /><path d="M12 2q4 3 0 6-2 2 1 4M15 6q-3 2-1 5" fill="none" stroke="#e3752c" strokeWidth="1.500" /><path d="M6 13q5 2 11 0M7 16q5 1.500 9 0M5 19q7 3 14 0M17 13q4 0 0 4" fill="none" stroke="#4a6f93" strokeWidth="1.400" /></g> },
  { on: true, icon: <g><rect width="24" height="24" fill="#d21f35" /><path d="M5 7h14l1 15H4z" fill="#fff" /><path d="M9 9V4q3-4 6 0v5" fill="none" stroke="#f3c9ce" strokeWidth="1.700" /><text x="6" y="19" fontSize="10" fontWeight="bold" fill="#d21f35">S9</text></g> },
];

function Taskbar() {
  return (
    <div className="flex h-[40px] w-full bg-[#0b0c11] font-['Noto_Sans',sans-serif] text-[12px] text-white">
      <div className="flex w-[50px] items-center justify-center pr-[2px]">
        <svg width="16" height="16" fill="#fff"><path d="M0 2.500l6.500-1v6H0zM7.500 1.300L16 0v7.500H7.500zM0 8.500h6.500v6l-6.500-1zM7.500 8.500H16V16l-8.500-1.300z" /></svg>
      </div>
      {apps.map((a, i) => (
        <div key={i} className="flex w-[49px] shrink-0 justify-center">
          <div className={`flex w-[43px] flex-col items-center justify-between ${a.active ? "mt-[5px] bg-[#3c3f45] pt-[3px]" : "pt-[8px]"}`}>
            <svg className="overflow-visible" width="24" height="24" viewBox="0 0 24 24">{a.icon}</svg>
            <span className={`h-[2px] w-[40px] ${a.on ? "bg-[#76b9ed]" : ""}`} />
          </div>
        </div>
      ))}
      <div className="ml-auto flex items-center pr-[4px]">
        <svg width="12" height="8" fill="none" stroke="#fff" strokeWidth="1.300"><path d="M.5 7L6 1.500 11.500 7" /></svg>
        <svg className="ml-[10px]" width="17" height="14" fill="none" stroke="#fff"><path d="M.5 5h2.500l4-4v12l-4-4H.5z" /><path d="M9 5q1.500 2 0 4M11.500 3q3 4 0 8M14 1q4 6 0 12" /></svg>
        <div className="ml-[7px] flex w-[28px] flex-col items-center leading-[17px]"><Fit w={23}>POR</Fit><Fit w={27}>PTB2</Fit></div>
        <div className="ml-[10px] flex w-[59px] flex-col items-center leading-[17px]"><Fit w={27}>16:20</Fit><Fit w={58}>13/08/2019</Fit></div>
        <svg className="ml-[18px] mt-[3px]" width="25" height="26" viewBox="0 0 25 26"><path d="M0 1h16v12H7l-3 4v-4H0z" fill="#fff" /><path d="M3 4.500h10M3 7.500h10M3 10h7" stroke="#111" /><circle cx="15.500" cy="17" r="7.500" fill="#3c3f45" stroke="#8b8d90" /><text x="12.500" y="21.500" fontSize="12" fill="#fff">1</text></svg>
        <span className="ml-[11px] h-[40px] w-px bg-[#4a4b50]" />
      </div>
    </div>
  );
}

export default function App() {
  return (
    <div className="relative flex h-[768px] w-[1360px] flex-col overflow-hidden">
      <Paint />
      <ShopWindow />
      <Taskbar />
    </div>
  );
}
